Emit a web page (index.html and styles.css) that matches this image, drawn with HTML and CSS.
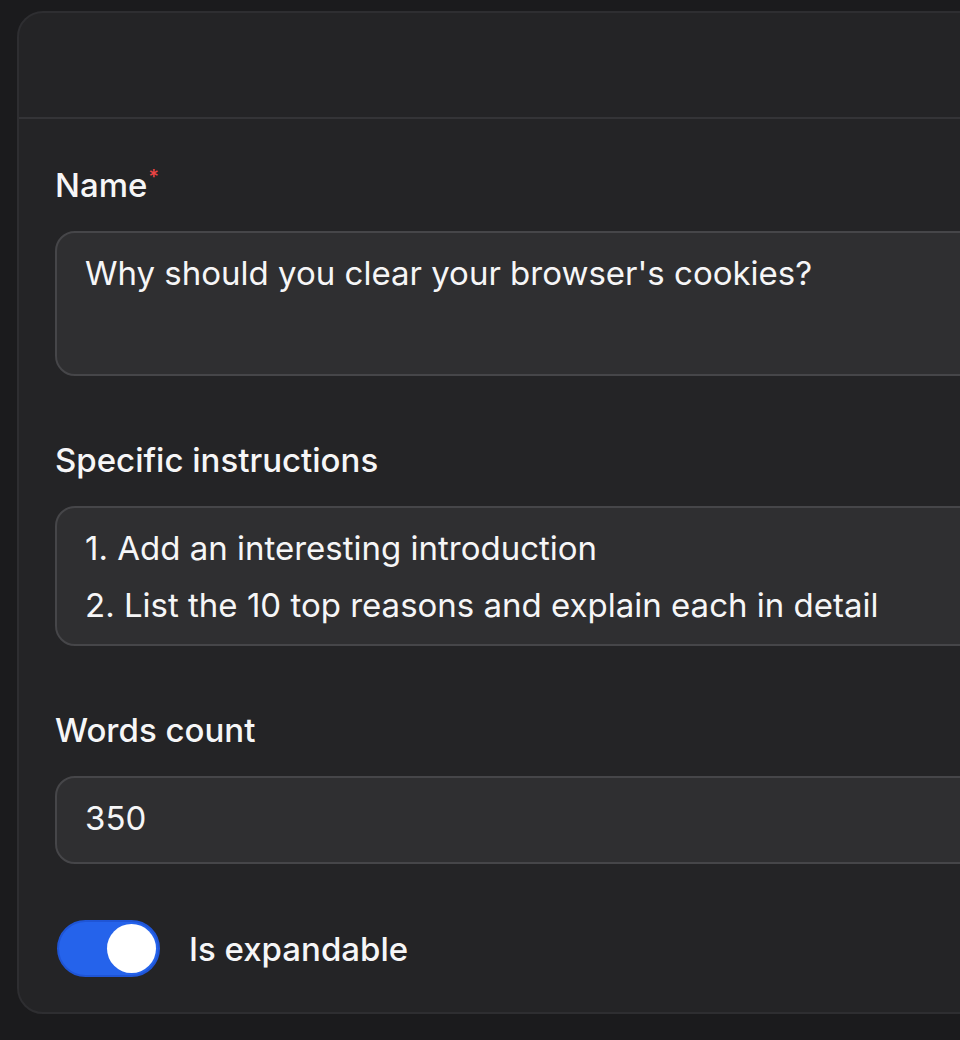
FILE: index.html
```html
<!DOCTYPE html>
<html lang="en">
<head>
<meta charset="utf-8">
<title>Form</title>
<link rel="stylesheet" href="styles.css">
</head>
<body>
<div class="page">
  <div class="card">
    <div class="card-header"></div>
    <div class="card-body">
      <div class="field">
        <label class="label">Name<span class="req">*</span></label>
        <div class="input textarea name-input">Why should you clear your browser's cookies?</div>
      </div>
      <div class="field">
        <label class="label">Specific instructions</label>
        <div class="input textarea instr-input">
          <div>1. Add an interesting introduction</div>
          <div>2. List the 10 top reasons and explain each in detail</div>
        </div>
      </div>
      <div class="field">
        <label class="label">Words count</label>
        <div class="input single">350</div>
      </div>
      <div class="toggle-row">
        <span class="toggle"><span class="knob"></span></span>
        <span class="toggle-label">Is expandable</span>
      </div>
    </div>
  </div>
</div>
</body>
</html>
```
FILE: styles.css
```css
* { box-sizing: border-box; }
html, body {
  margin: 0;
  padding: 0;
  background: #1b1b1d;
  height: 100%;
  overflow: hidden;
}
body {
  font-family: Inter, "Noto Sans", sans-serif;
  color: #f4f4f5;
}
.page {
  padding: 11px 0 0 17px;
  overflow: hidden;
}
.card {
  width: calc(100% + 160px);
  height: 1003px;
  background: #242426;
  border: 2px solid #2e2e31;
  border-radius: 26px;
}
.card-header {
  height: 106px;
  border-bottom: 2px solid #343437;
}
.card-body {
  padding: 46px 36px 36px 36px;
  display: flex;
  flex-direction: column;
}
.field {
  display: flex;
  flex-direction: column;
  gap: 26px;
  margin-bottom: 64px;
}
.label {
  font-size: 33px;
  line-height: 40px;
  font-weight: 500;
  color: #f6f6f7;
}
.req {
  color: #ef4444;
  font-size: 20px;
  vertical-align: top;
  position: relative;
  top: -8px;
  margin-left: 1px;
}
.input {
  background: #2f2f31;
  border: 2px solid #464649;
  border-radius: 20px;
  font-size: 33px;
  line-height: 57px;
  padding: 12px 28px;
  color: #f6f6f7;
}
.name-input { height: 145px; }
.instr-input { height: 140px; }
.single { height: 88px; }
.field:nth-child(3) { margin-bottom: 56px; }
.toggle-row {
  display: flex;
  align-items: center;
  gap: 29px;
  padding-left: 2px;
}
.toggle {
  width: 103px;
  height: 57px;
  border-radius: 29px;
  background: #2563eb;
  border: 2px solid #1f55d6;
  display: flex;
  align-items: center;
  justify-content: flex-end;
  padding-right: 2px;
}
.knob {
  width: 49px;
  height: 49px;
  border-radius: 50%;
  background: #ffffff;
}
.toggle-label {
  font-size: 33px;
  font-weight: 500;
  line-height: 40px;
  color: #f6f6f7;
}
```
